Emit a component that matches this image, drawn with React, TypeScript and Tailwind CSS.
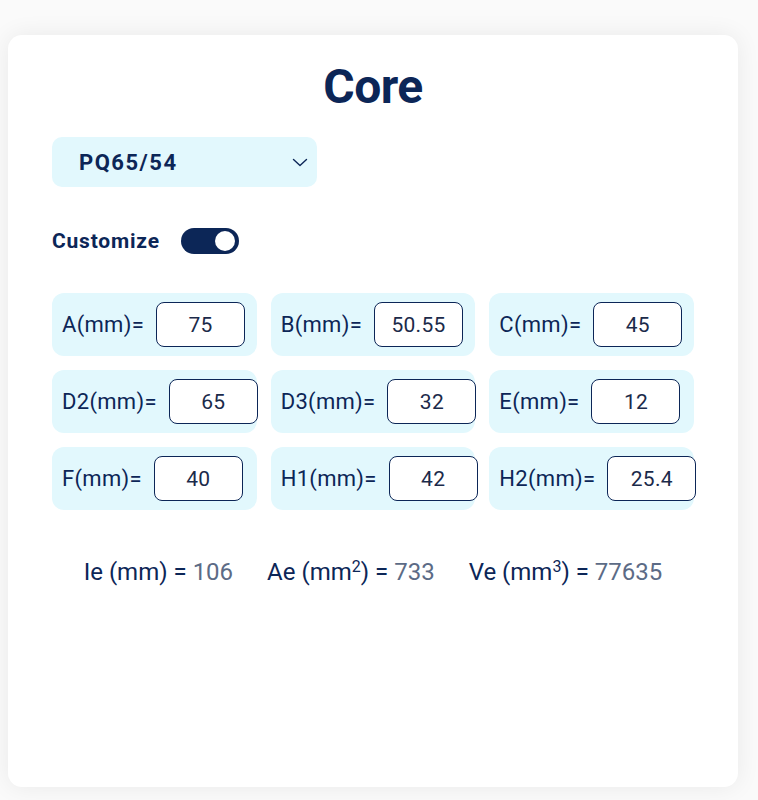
import { useState } from 'react';

const navy = 'text-[#0c2657]';

type Dim = { label: string; value: string };

const dims: Dim[] = [
  { label: 'A(mm)=', value: '75' },
  { label: 'B(mm)=', value: '50.55' },
  { label: 'C(mm)=', value: '45' },
  { label: 'D2(mm)=', value: '65' },
  { label: 'D3(mm)=', value: '32' },
  { label: 'E(mm)=', value: '12' },
  { label: 'F(mm)=', value: '40' },
  { label: 'H1(mm)=', value: '42' },
  { label: 'H2(mm)=', value: '25.4' },
];

function DimField({ label, value }: Dim) {
  const [val, setVal] = useState(value);
  return (
    <div className="flex items-center h-[63px] rounded-[12px] bg-[#e2f8fd] pl-[10px]">
      <span className={`text-[22px] leading-none tracking-[0.3px] ${navy} whitespace-nowrap`}>{label}</span>
      <input
        value={val}
        onChange={(e) => setVal(e.target.value)}
        className="ml-[12px] w-[89px] h-[45px] shrink-0 rounded-[8px] border-[1.5px] border-[#0c2657] bg-white text-center text-[21px] tracking-[0.3px] text-[#1b2a4a] outline-none"
      />
    </div>
  );
}

export default function App() {
  const [custom, setCustom] = useState(true);

  return (
    <div className="min-h-[800px] bg-[#fafafa] pt-[35px] px-[8px] pb-[13px] font-['Roboto',sans-serif]">
      <div className="h-[752px] w-[730px] rounded-[14px] bg-white shadow-[0_0_24px_rgba(0,0,0,0.07)] px-[44px] pt-[22px]">
        <h1 className={`text-center text-[48px] font-bold leading-[60px] ${navy} tracking-[-0.5px]`}>Core</h1>

        <div className="mt-[20px] flex h-[50px] w-[265px] items-center justify-between rounded-[10px] bg-[#e2f8fd] pl-[27px] pr-[8px]">
          <span className={`text-[22px] font-bold tracking-[1.5px] ${navy}`}>PQ65/54</span>
          <svg width="16" height="9" viewBox="0 0 16 9" fill="none" stroke="#0c2657" strokeWidth="1.4" strokeLinecap="round" strokeLinejoin="round" className="mr-[1px]">
            <path d="M1.5 1.5 8 7.5l6.5-6" />
          </svg>
        </div>

        <div className="mt-[41px] flex h-[26px] items-center gap-[21px]">
          <span className={`text-[21px] font-bold leading-none tracking-[0.8px] ${navy}`}>Customize</span>
          <button
            onClick={() => setCustom(!custom)}
            className={`flex h-[26px] w-[58px] items-center rounded-full px-[4px] ${custom ? 'justify-end bg-[#0c2657]' : 'justify-start bg-gray-300'}`}
          >
            <span className="block h-[20px] w-[20px] rounded-full bg-white" />
          </button>
        </div>

        <div className="mt-[39px] grid grid-cols-3 gap-x-[14px] gap-y-[14px]">
          {dims.map((d) => (
            <DimField key={d.label} {...d} />
          ))}
        </div>

        <div className="mt-[50px] flex justify-center gap-[34px] text-[24px] leading-none">
          <span>
            <span className={navy}>Ie (mm) = </span>
            <span className="text-[#5c6b86]">106</span>
          </span>
          <span>
            <span className={navy}>
              Ae (mm<sup className="text-[16px]">2</sup>) ={' '}
            </span>
            <span className="text-[#5c6b86]">733</span>
          </span>
          <span>
            <span className={navy}>
              Ve (mm<sup className="text-[16px]">3</sup>) ={' '}
            </span>
            <span className="text-[#5c6b86]">77635</span>
          </span>
        </div>
      </div>
    </div>
  );
}
